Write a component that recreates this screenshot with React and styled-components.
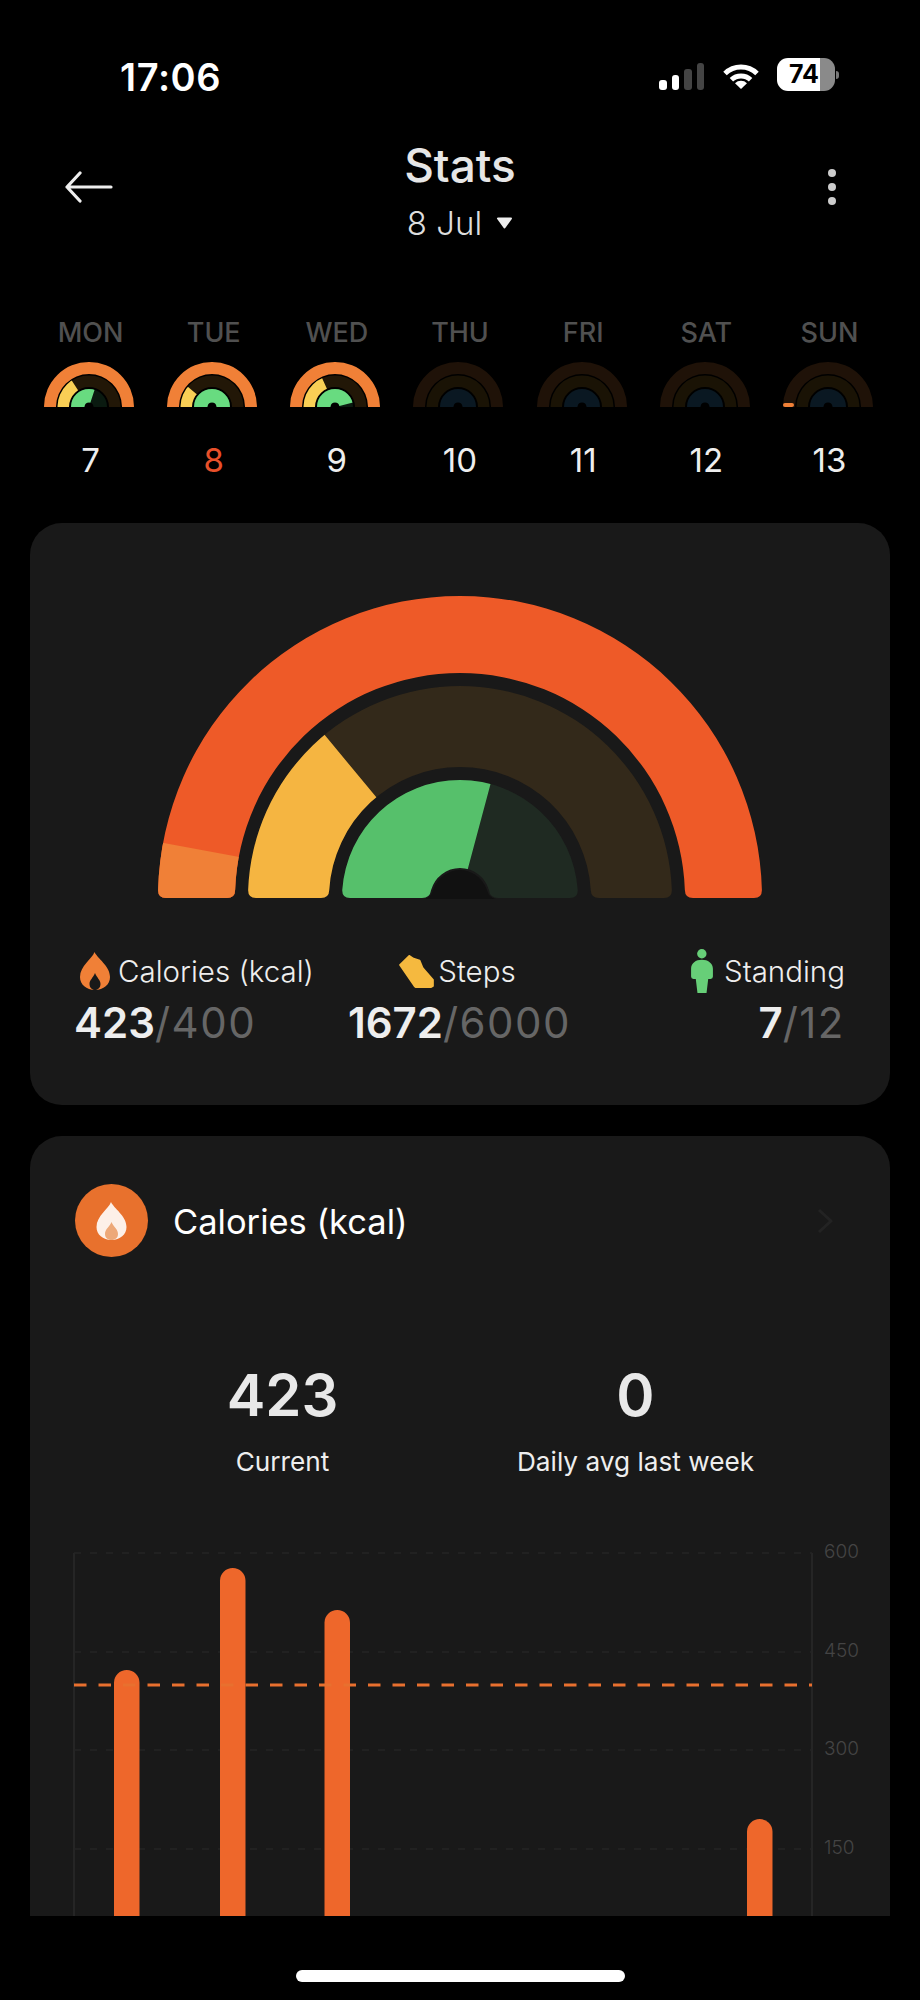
import React from 'react';
import styled, { createGlobalStyle } from 'styled-components';

const Global = createGlobalStyle`
  html, body { margin: 0; padding: 0; background: #000; }
  body { font-family: Inter, "Liberation Sans", sans-serif; }
`;

const Page = styled.div`
  width: 920px;
  height: 2000px;
  background: #000;
  display: flex;
  flex-direction: column;
  overflow: hidden;
`;

const StatusBar = styled.div`
  height: 100px;
  box-sizing: border-box;
  padding: 58px 81px 0 120px;
  display: flex;
  justify-content: space-between;
  align-items: flex-start;
`;
const Time = styled.div`
  margin-top: 3px;
  font-size: 38px;
  line-height: 32px;
  font-weight: 600;
  color: #fff;
  letter-spacing: 0.6px;
`;
const StatusIcons = styled.div`
  display: flex;
  align-items: center;
  height: 33px;
`;
const Signal = styled.div`
  display: flex;
  align-items: flex-end;
  gap: 5px;
  height: 27px;
  margin: 3px 18px 0 0;
`;
const SignalBar = styled.i`
  display: block;
  width: 7.5px;
  height: ${p => p.$h}px;
  border-radius: 3px;
  background: ${p => (p.$on ? '#fff' : '#444')};
`;
const Wifi = styled.svg`
  display: block;
  width: 38px;
  height: 26px;
  margin: 3px 17px 0 0;
`;
const Battery = styled.div`
  width: 58px;
  height: 33px;
  box-sizing: border-box;
  padding-right: 4px;
  border-radius: 11px;
  background: linear-gradient(90deg, #fff 0 43px, #8a8a8a 43px);
  color: #000;
  font-size: 25px;
  line-height: 33px;
  font-weight: 700;
  text-align: center;
`;
const BatteryTip = styled.i`
  display: block;
  width: 3px;
  height: 8px;
  margin-left: 1px;
  border-radius: 0 3px 3px 0;
  background: #777;
`;

const Header = styled.header`
  margin-top: 38px;
  padding: 0 65px;
  display: grid;
  grid-template-columns: 1fr auto 1fr;
  align-items: start;
`;
const BackIcon = styled.svg`
  display: block;
  width: 48px;
  height: 32px;
  margin-top: 33px;
`;
const TitleBlock = styled.div`
  display: flex;
  flex-direction: column;
  align-items: center;
`;
const Title = styled.h1`
  margin: 0;
  font-size: 46px;
  line-height: 54px;
  font-weight: 500;
  color: #e6e6e6;
`;
const DateRow = styled.div`
  margin-top: 11px;
  height: 40px;
  display: flex;
  align-items: center;
  gap: 14px;
  font-size: 33px;
  line-height: 40px;
  font-weight: 300;
  color: #ddd;
`;
const Caret = styled.svg`
  display: block;
  width: 17px;
  height: 12px;
`;
const MoreDots = styled.div`
  justify-self: end;
  margin: 31px 19px 0 0;
  display: flex;
  flex-direction: column;
  gap: 6px;
`;
const Dot = styled.i`
  display: block;
  width: 8px;
  height: 8px;
  border-radius: 50%;
  background: #ccc;
`;

const Week = styled.div`
  margin-top: 73px;
  padding: 0 29px;
  display: grid;
  grid-template-columns: repeat(7, 1fr);
`;
const Day = styled.div`
  display: flex;
  flex-direction: column;
  align-items: center;
`;
const DayName = styled.div`
  font-size: 27px;
  line-height: 34px;
  font-weight: 500;
  color: #505050;
`;
const MiniSvg = styled.svg`
  display: block;
  width: 90px;
  height: 45px;
  margin: 12px 3px 0 0;
`;
const DayNumber = styled.div`
  margin-top: 33px;
  font-size: 33px;
  line-height: 40px;
  font-weight: 400;
  color: ${p => (p.$active ? '#E8502A' : '#eee')};
`;

const Card = styled.section`
  margin: 0 30px;
  background: #191919;
  border-radius: 32px;
  box-sizing: border-box;
  overflow: hidden;
`;
const SummaryCard = styled(Card)`
  margin-top: 43px;
  height: 582px;
  padding: 73px 45px 0 44px;
`;
const BigSvg = styled.svg`
  display: block;
  width: 604px;
  height: 304px;
  margin: 0 auto;
  overflow: visible;
`;
const Legend = styled.div`
  margin-top: 49px;
  display: grid;
  grid-template-columns: 1fr auto 1fr;
`;
const LegendCol = styled.div`
  display: flex;
  flex-direction: column;
  align-items: ${p => p.$align};
`;
const LegendHead = styled.div`
  height: 44px;
  display: flex;
  align-items: center;
  gap: ${p => p.$gap}px;
  padding: 0 ${p => p.$padEnd || 0}px 0 ${p => p.$pad || 0}px;
  font-size: 29.5px;
  font-weight: 300;
  color: #eee;
`;
const LegendIcon = styled.svg`
  display: block;
  flex: none;
  width: ${p => p.$w}px;
  height: ${p => p.$h}px;
`;
const Value = styled.div`
  margin-top: 6px;
  font-size: 42px;
  line-height: 48px;
  font-weight: 600;
  color: #eee;
`;
const Target = styled.span`
  font-weight: 400;
  letter-spacing: 1.5px;
  color: #666;
`;

const DetailCard = styled(Card)`
  margin-top: 31px;
  height: 780px;
  border-radius: 32px 32px 0 0;
`;
const DetailHead = styled.div`
  padding: 48px 57px 0 45px;
  display: flex;
  align-items: center;
`;
const RoundIcon = styled.div`
  width: 73px;
  height: 73px;
  border-radius: 50%;
  background: #e8712d;
  display: flex;
  align-items: center;
  justify-content: center;
`;
const DetailTitle = styled.div`
  margin: 1px 0 0 25px;
  flex: 1;
  font-size: 34.5px;
  font-weight: 400;
  color: #fff;
`;
const Chevron = styled.svg`
  display: block;
  width: 16px;
  height: 26px;
`;
const Figures = styled.div`
  margin-top: 103px;
  padding-left: 76px;
  display: grid;
  grid-template-columns: 353px 353px;
`;
const Figure = styled.div`
  display: flex;
  flex-direction: column;
  align-items: center;
`;
const FigureValue = styled.div`
  font-size: 58px;
  line-height: 70px;
  font-weight: 600;
  color: #e8e8e8;
`;
const FigureLabel = styled.div`
  margin-top: 15px;
  font-size: 26.2px;
  line-height: 34px;
  font-weight: 400;
  color: #eee;
`;
const ChartSvg = styled.svg`
  display: block;
  margin-top: 61px;
  width: 860px;
  height: 400px;
`;
const AxisLabel = styled.text`
  font-size: 19px;
  font-weight: 300;
  fill: #444;
`;

const HomeBar = styled.div`
  margin: 54px auto 0;
  width: 329px;
  height: 12px;
  border-radius: 6px;
  background: #fff;
`;

/* ---- gauge geometry: angles measured from the left end, clockwise over the top ---- */
const pt = (cx, cy, r, a) => {
  const t = (a * Math.PI) / 180;
  return `${(cx - r * Math.cos(t)).toFixed(2)} ${(cy - r * Math.sin(t)).toFixed(2)}`;
};
const sector = (cx, cy, r1, r0, a0, a1) =>
  `M${pt(cx, cy, r1, a0)}A${r1} ${r1} 0 0 1 ${pt(cx, cy, r1, a1)}L${pt(cx, cy, r0, a1)}A${r0} ${r0} 0 0 0 ${pt(cx, cy, r0, a0)}Z`;
const ring = (cx, cy, R, r, c) => {
  const xo = Math.sqrt(R * R - c * c);
  const xi = Math.sqrt(r * r - c * c);
  return (
    `M${cx - xo} ${cy - c}A${R} ${R} 0 0 1 ${cx + xo} ${cy - c}` +
    `Q${cx + R} ${cy} ${cx + R - c} ${cy}L${cx + r + c} ${cy}Q${cx + r} ${cy} ${cx + xi} ${cy - c}` +
    `A${r} ${r} 0 0 0 ${cx - xi} ${cy - c}Q${cx - r} ${cy} ${cx - r - c} ${cy}L${cx - R + c} ${cy}Q${cx - R} ${cy} ${cx - xo} ${cy - c}Z`
  );
};

const RingPart = ({ id, cx, cy, R, r, c, base, fill, from = 0, to }) => (
  <g>
    <clipPath id={id}>
      <path d={ring(cx, cy, R, r, c)} />
    </clipPath>
    <path d={ring(cx, cy, R, r, c)} fill={base} />
    {to > from && (
      <path d={sector(cx, cy, R + 2, Math.max(r - 2, 0), from, to)} fill={fill} clipPath={`url(#${id})`} />
    )}
  </g>
);

const BigGauge = () => {
  const cx = 302, cy = 302;
  return (
    <BigSvg viewBox="0 0 604 304">
      <RingPart id="b1" cx={cx} cy={cy} R={302} r={225} c={8} base="#EE5A28" fill="#F08037" from={0} to={10.5} />
      <RingPart id="b2" cx={cx} cy={cy} R={212} r={131} c={8} base="#33291A" fill="#F5B541" from={0} to={50.3} />
      <RingPart id="b3" cx={cx} cy={cy} R={118} r={30} c={8} base="#1F2A22" fill="#56C06B" from={0} to={105} />
      <path d={`M${cx - 36} ${cy + 1}Q${cx - 29} ${cy} ${cx - 27} ${cy - 8}C${cx - 22} ${cy - 22} ${cx - 10} ${cy - 28} ${cx} ${cy - 28}C${cx + 10} ${cy - 28} ${cx + 22} ${cy - 22} ${cx + 27} ${cy - 8}Q${cx + 29} ${cy} ${cx + 36} ${cy + 1}Z`} fill="#111" />
    </BigSvg>
  );
};

const MiniGauge = ({ id, y = 0, g = 0, dim, spark }) => {
  const cx = 45, cy = 45;
  const c = dim
    ? { o: '#1F1208', m: '#1A1305', i: '#0A1822' }
    : { o: '#F08037', m: '#221707', i: '#0A1A10' };
  return (
    <MiniSvg viewBox="0 0 90 45">
      <RingPart id={`m${id}a`} cx={cx} cy={cy} R={45} r={33} c={0.6} base={c.o} />
      <RingPart id={`m${id}b`} cx={cx} cy={cy} R={31.5} r={20} c={0.6} base={c.m} fill="#F9CF55" to={y} />
      <RingPart id={`m${id}c`} cx={cx} cy={cy} R={18} r={4.5} c={0.6} base={c.i} fill="#68DB80" to={g} />
      {spark && <rect x="0" y="41" width="11" height="4" rx="2" fill="#F08037" />}
    </MiniSvg>
  );
};

const days = [
  { name: 'MON', n: 7, y: 57, g: 108 },
  { name: 'TUE', n: 8, y: 40, g: 180, active: true },
  { name: 'WED', n: 9, y: 66, g: 166 },
  { name: 'THU', n: 10, dim: true },
  { name: 'FRI', n: 11, dim: true },
  { name: 'SAT', n: 12, dim: true },
  { name: 'SUN', n: 13, dim: true, spark: true },
];

const gridY = [13, 112, 210, 309];
const axis = [600, 450, 300, 150];
const bars = [
  { x: 84, top: 130 },
  { x: 190, top: 28 },
  { x: 294.5, top: 70 },
  { x: 717, top: 279 },
];

const FlamePath = 'M14.5 0C17 6 30 14 30 25C30 32.5 23.5 38 15 38C6.5 38 0 32.5 0 25C0 14 12 7 14.5 0Z';

export default function App() {
  return (
    <Page>
      <Global />
      <StatusBar>
        <Time>17:06</Time>
        <StatusIcons>
          <Signal>
            <SignalBar $h={10} $on />
            <SignalBar $h={15} $on />
            <SignalBar $h={21} />
            <SignalBar $h={27} />
          </Signal>
          <Wifi viewBox="0 0 38 26">
            <path d="M3 10.5A23 23 0 0 1 35 10.5" fill="none" stroke="#fff" strokeWidth="5" />
            <path d="M9.4 16.8A14 14 0 0 1 28.6 16.8" fill="none" stroke="#fff" strokeWidth="5" />
            <path d="M19 26L13 20.2A8.6 8.6 0 0 1 25 20.2Z" fill="#fff" />
          </Wifi>
          <Battery>74</Battery>
          <BatteryTip />
        </StatusIcons>
      </StatusBar>

      <Header>
        <BackIcon viewBox="0 0 48 32" fill="none" stroke="#eee" strokeWidth="3.2" strokeLinecap="round" strokeLinejoin="round">
          <path d="M15 2L2 16L15 30M2 16H46" />
        </BackIcon>
        <TitleBlock>
          <Title>Stats</Title>
          <DateRow>
            8 Jul
            <Caret viewBox="0 0 17 12">
              <path d="M2 1.5H15L8.5 10.5Z" fill="#eee" stroke="#eee" strokeWidth="2" strokeLinejoin="round" />
            </Caret>
          </DateRow>
        </TitleBlock>
        <MoreDots>
          <Dot />
          <Dot />
          <Dot />
        </MoreDots>
      </Header>

      <Week>
        {days.map(d => (
          <Day key={d.name}>
            <DayName>{d.name}</DayName>
            <MiniGauge id={d.name} y={d.y} g={d.g} dim={d.dim} spark={d.spark} />
            <DayNumber $active={d.active}>{d.n}</DayNumber>
          </Day>
        ))}
      </Week>

      <SummaryCard>
        <BigGauge />
        <Legend>
          <LegendCol $align="flex-start">
            <LegendHead $gap={8} $pad={6}>
              <LegendIcon $w={30} $h={38} viewBox="0 0 30 38">
                <path d={FlamePath} fill="#F08037" />
                <path d="M15 21C17 26 20.5 28 20.5 32C20.5 35.5 18 38 15 38C12 38 9.5 35.5 9.5 32C9.5 28 13 26 15 21Z" fill="#191919" />
              </LegendIcon>
              Calories (kcal)
            </LegendHead>
            <Value>423<Target>/400</Target></Value>
          </LegendCol>
          <LegendCol $align="center">
            <LegendHead $gap={4} $padEnd={4}>
              <LegendIcon $w={35} $h={33} viewBox="28 33 102 97">
                <path d="M31 62L58 36L70 44L88 50L97 72L127 106V124L122 127H76L72 122Z" fill="#F5B93F" stroke="#F5B93F" strokeWidth="6" strokeLinejoin="round" />
              </LegendIcon>
              Steps
            </LegendHead>
            <Value>1672<Target>/6000</Target></Value>
          </LegendCol>
          <LegendCol $align="flex-end">
            <LegendHead $gap={11}>
              <LegendIcon $w={22} $h={44} viewBox="38 26 65 131">
                <circle cx="70" cy="40" r="14" fill="#67CF78" />
                <path d="M38 108V85C38 68 52 58 70 58C88 58 103 68 103 85V108Q103 115 96 115H89L84 157H57L52 115H45Q38 115 38 108Z" fill="#67CF78" />
              </LegendIcon>
              Standing
            </LegendHead>
            <Value>7<Target>/12</Target></Value>
          </LegendCol>
        </Legend>
      </SummaryCard>

      <DetailCard>
        <DetailHead>
          <RoundIcon>
            <svg width="31" height="38" viewBox="0 0 30 38">
              <path d={FlamePath} fill="#FDF0E8" />
              <path d="M15 20C17 25 21.5 27 21.5 32C21.5 35.5 19 38 15 38C11 38 8.5 35.5 8.5 32C8.5 27 13 25 15 20Z" fill="#EDA878" />
            </svg>
          </RoundIcon>
          <DetailTitle>Calories (kcal)</DetailTitle>
          <Chevron viewBox="0 0 16 26" fill="none" stroke="#232323" strokeWidth="3" strokeLinejoin="round">
            <path d="M2 2L14 13L2 24" />
          </Chevron>
        </DetailHead>
        <Figures>
          <Figure>
            <FigureValue>423</FigureValue>
            <FigureLabel>Current</FigureLabel>
          </Figure>
          <Figure>
            <FigureValue>0</FigureValue>
            <FigureLabel>Daily avg last week</FigureLabel>
          </Figure>
        </Figures>
        <ChartSvg viewBox="0 0 860 400">
          <path d="M44 13V400M782 13V400" stroke="#2a2a2a" strokeWidth="1.5" />
          {gridY.map(y => (
            <path key={y} d={`M44 ${y}H782`} stroke="#252525" strokeWidth="1.5" strokeDasharray="7 9" />
          ))}
          {bars.map(b => (
            <rect key={b.x} x={b.x} y={b.top} width="25.5" height={400 - b.top} rx="12.7" fill="#EE672B" />
          ))}
          <path d="M44 145H782" stroke="#E8702F" strokeWidth="3" strokeDasharray="12.5 12" />
          {axis.map((v, i) => (
            <AxisLabel key={v} x="794" y={gridY[i] + 5}>{v}</AxisLabel>
          ))}
        </ChartSvg>
      </DetailCard>
      <HomeBar />
    </Page>
  );
}
